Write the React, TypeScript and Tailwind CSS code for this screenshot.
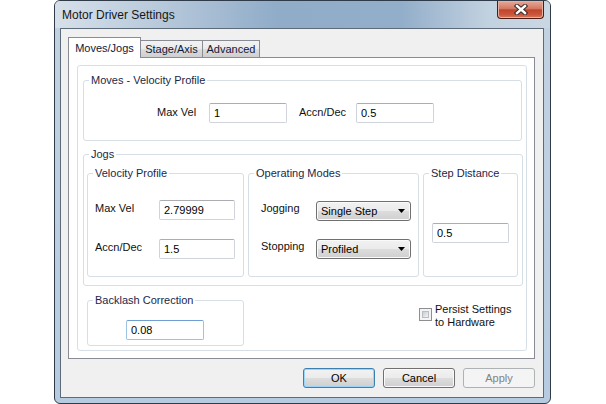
import React from 'react';

interface GroupBoxProps {
  title: string;
  className?: string;
  children?: React.ReactNode;
}

function GroupBox({ title, className = '', children }: GroupBoxProps) {
  return (
    <fieldset className={`border border-[#d5dfe5] rounded-[3px] ${className}`}>
      <legend className="ml-[5px] px-[2px] text-[11px] leading-[14px] text-[#1c2748]">{title}</legend>
      {children}
    </fieldset>
  );
}

interface TextBoxProps {
  value: string;
  className?: string;
  focused?: boolean;
}

function TextBox({ value, className = 'w-[78px]', focused = false }: TextBoxProps) {
  const border = focused
    ? 'border-[#9cc3e6] border-t-[#6e9fd0]'
    : 'border-[#d0d4da] border-t-[#abadb3]';
  return (
    <input
      readOnly
      defaultValue={value}
      className={`${className} h-[20px] border ${border} rounded-[2px] bg-white pl-[4px] text-[11px] leading-[14px] text-black outline-none`}
    />
  );
}

function Combo({ value }: { value: string }) {
  return (
    <div className="w-[95px] h-[20px] flex items-center justify-between border border-[#707070] rounded-[3px] bg-[linear-gradient(#f2f2f2,#ebebeb_50%,#dddddd_50%,#cfcfcf)] shadow-[inset_0_0_0_1px_#fafafa] pl-[4px] pr-[5px] text-[11px] leading-[14px] text-black">
      <span>{value}</span>
      <svg width="7" height="4" viewBox="0 0 7 4">
        <path d="M0 0h7L3.5 4z" fill="#000" />
      </svg>
    </div>
  );
}

function Label({ text, className = '' }: { text: string; className?: string }) {
  return <span className={`text-[11px] leading-[14px] text-[#111] ${className}`}>{text}</span>;
}

export default function App() {
  return (
    <div className="w-[606px] h-[404px] bg-white overflow-hidden font-['Liberation_Sans',Arial,sans-serif]">
      {/* window frame */}
      <div className="ml-[54px] w-[497px] h-[404px] border border-[#2f3b48] rounded-[6px] bg-[linear-gradient(#c3d2e0,#b6cbe0)] flex flex-col">
        {/* title bar */}
        <div className="h-[27px] flex items-start rounded-t-[5px] bg-[linear-gradient(90deg,#d6e0ea_0%,#b6c8da_22%,#90acc9_45%,#93aeca_70%,#c3d2e0_88%,#cad7e3_100%)]">
          <span className="mt-[7px] ml-[7px] text-[12px] leading-[14px] text-[#161616]">Motor Driver Settings</span>
          <div className="ml-auto mr-[6px] w-[47px] h-[18px] flex items-center justify-center border border-t-0 border-[#4a1d14] rounded-b-[4px] bg-[linear-gradient(#e7a99a,#d37962_45%,#c2442b_52%,#c9563c_80%,#d97a5e)] shadow-[inset_0_0_0_1px_#e8b0a0]">
            <svg width="14" height="11" viewBox="0 0 14 11">
              <path d="M3 2 L11 9 M11 2 L3 9" stroke="#3a2a28" strokeWidth="4.4" strokeLinecap="square" />
              <path d="M3 2 L11 9 M11 2 L3 9" stroke="#ffffff" strokeWidth="2.4" strokeLinecap="square" />
            </svg>
          </div>
        </div>

        {/* client area */}
        <div className="ml-[5px] w-[484px] h-[370px] border border-[#5d6a78] bg-[#f0f0f0] flex flex-col">
          {/* tabs */}
          <div className="mt-[8px] ml-[7px] h-[20px] flex items-end">
            <div className="relative z-10 -mb-px w-[73px] h-[21px] flex items-center justify-center pb-[1px] border border-b-0 border-[#898c95] bg-white text-[11px] leading-[14px] text-[#10183a]">
              Moves/Jogs
            </div>
            <div className="w-[62px] h-[17px] flex items-center justify-center border border-l-0 border-b-0 border-[#898c95] bg-[linear-gradient(#f2f2f2,#ebebeb_50%,#dddddd_50%,#cfcfcf)] text-[11px] leading-[14px] text-[#10183a]">
              Stage/Axis
            </div>
            <div className="w-[57px] h-[17px] flex items-center justify-center border border-l-0 border-b-0 border-[#898c95] bg-[linear-gradient(#f2f2f2,#ebebeb_50%,#dddddd_50%,#cfcfcf)] text-[11px] leading-[14px] text-[#10183a]">
              Advanced
            </div>
          </div>

          {/* tab page */}
          <div className="ml-[7px] w-[467px] h-[302px] border border-[#898c95] bg-white">
            <div className="ml-[8px] mt-[7px] w-[450px] h-[286px] border border-[#d5dfe5] rounded-[3px] flex flex-col">
              <GroupBox title="Moves - Velocity Profile" className="ml-[5px] mt-[7px] w-[439px] h-[68px]">
                <div className="pt-[16px] flex items-start">
                  <Label text="Max Vel" className="ml-[73px] w-[52px] mt-[2px]" />
                  <TextBox value="1" />
                  <Label text="Accn/Dec" className="ml-[12px] w-[57px] mt-[2px]" />
                  <TextBox value="0.5" />
                </div>
              </GroupBox>

              <GroupBox title="Jogs" className="ml-[5px] mt-[6px] w-[440px] h-[139px]">
                <div className="pl-[3px] pt-[5px] flex gap-[4px]">
                  <GroupBox title="Velocity Profile" className="w-[157px] h-[111px]">
                    <div className="pl-[7px] pt-[20px] flex flex-col gap-[19px]">
                      <div className="flex items-start">
                        <Label text="Max Vel" className="w-[64px] mt-[1px]" />
                        <TextBox value="2.79999" className="w-[76px]" />
                      </div>
                      <div className="flex items-start">
                        <Label text="Accn/Dec" className="w-[64px] mt-[1px]" />
                        <TextBox value="1.5" className="w-[76px]" />
                      </div>
                    </div>
                  </GroupBox>

                  <GroupBox title="Operating Modes" className="w-[171px] h-[111px]">
                    <div className="pl-[12px] pt-[21px] flex flex-col gap-[18px]">
                      <div className="flex items-start">
                        <Label text="Jogging" className="w-[55px]" />
                        <Combo value="Single Step" />
                      </div>
                      <div className="flex items-start">
                        <Label text="Stopping" className="w-[55px]" />
                        <Combo value="Profiled" />
                      </div>
                    </div>
                  </GroupBox>

                  <GroupBox title="Step Distance" className="w-[95px] h-[111px]">
                    <div className="pl-[8px] pt-[40px]">
                      <TextBox value="0.5" className="w-[77px]" />
                    </div>
                  </GroupBox>
                </div>
              </GroupBox>

              <div className="ml-[9px] mt-[7px] flex items-start">
                <GroupBox title="Backlash Correction" className="w-[157px] h-[53px]">
                  <div className="pt-[10px] pl-[38px]">
                    <TextBox value="0.08" focused />
                  </div>
                </GroupBox>

                <div className="ml-[175px] mt-[10px] flex items-start">
                  <div className="mt-[5px] w-[13px] h-[13px] border border-[#8e8f8f] bg-[#f4f4f4] p-[2px]">
                    <div className="w-full h-full border border-[#b9bec4] bg-[linear-gradient(135deg,#c9cdd3,#f3f4f5)]" />
                  </div>
                  <div className="ml-[3px] text-[11px] leading-[13px] text-[#111]">
                    <div>Persist Settings</div>
                    <div>to Hardware</div>
                  </div>
                </div>
              </div>
            </div>
          </div>

          {/* buttons */}
          <div className="mt-[9px] pr-[8px] flex justify-end gap-[8px]">
            <button className="w-[72px] h-[20px] border border-[#3c7fb1] rounded-[3px] bg-[linear-gradient(#f2f2f2,#ebebeb_50%,#dddddd_50%,#cfcfcf)] shadow-[inset_0_0_0_1px_#9ad6f7] text-[11px] leading-[14px] text-black">
              OK
            </button>
            <button className="w-[72px] h-[20px] border border-[#707070] rounded-[3px] bg-[linear-gradient(#f2f2f2,#ebebeb_50%,#dddddd_50%,#cfcfcf)] shadow-[inset_0_0_0_1px_#fafafa] text-[11px] leading-[14px] text-black">
              Cancel
            </button>
            <button className="w-[72px] h-[20px] border border-[#adb2b5] rounded-[3px] bg-[#f4f4f4] text-[11px] leading-[14px] text-[#838383]">
              Apply
            </button>
          </div>
        </div>
      </div>
    </div>
  );
}
